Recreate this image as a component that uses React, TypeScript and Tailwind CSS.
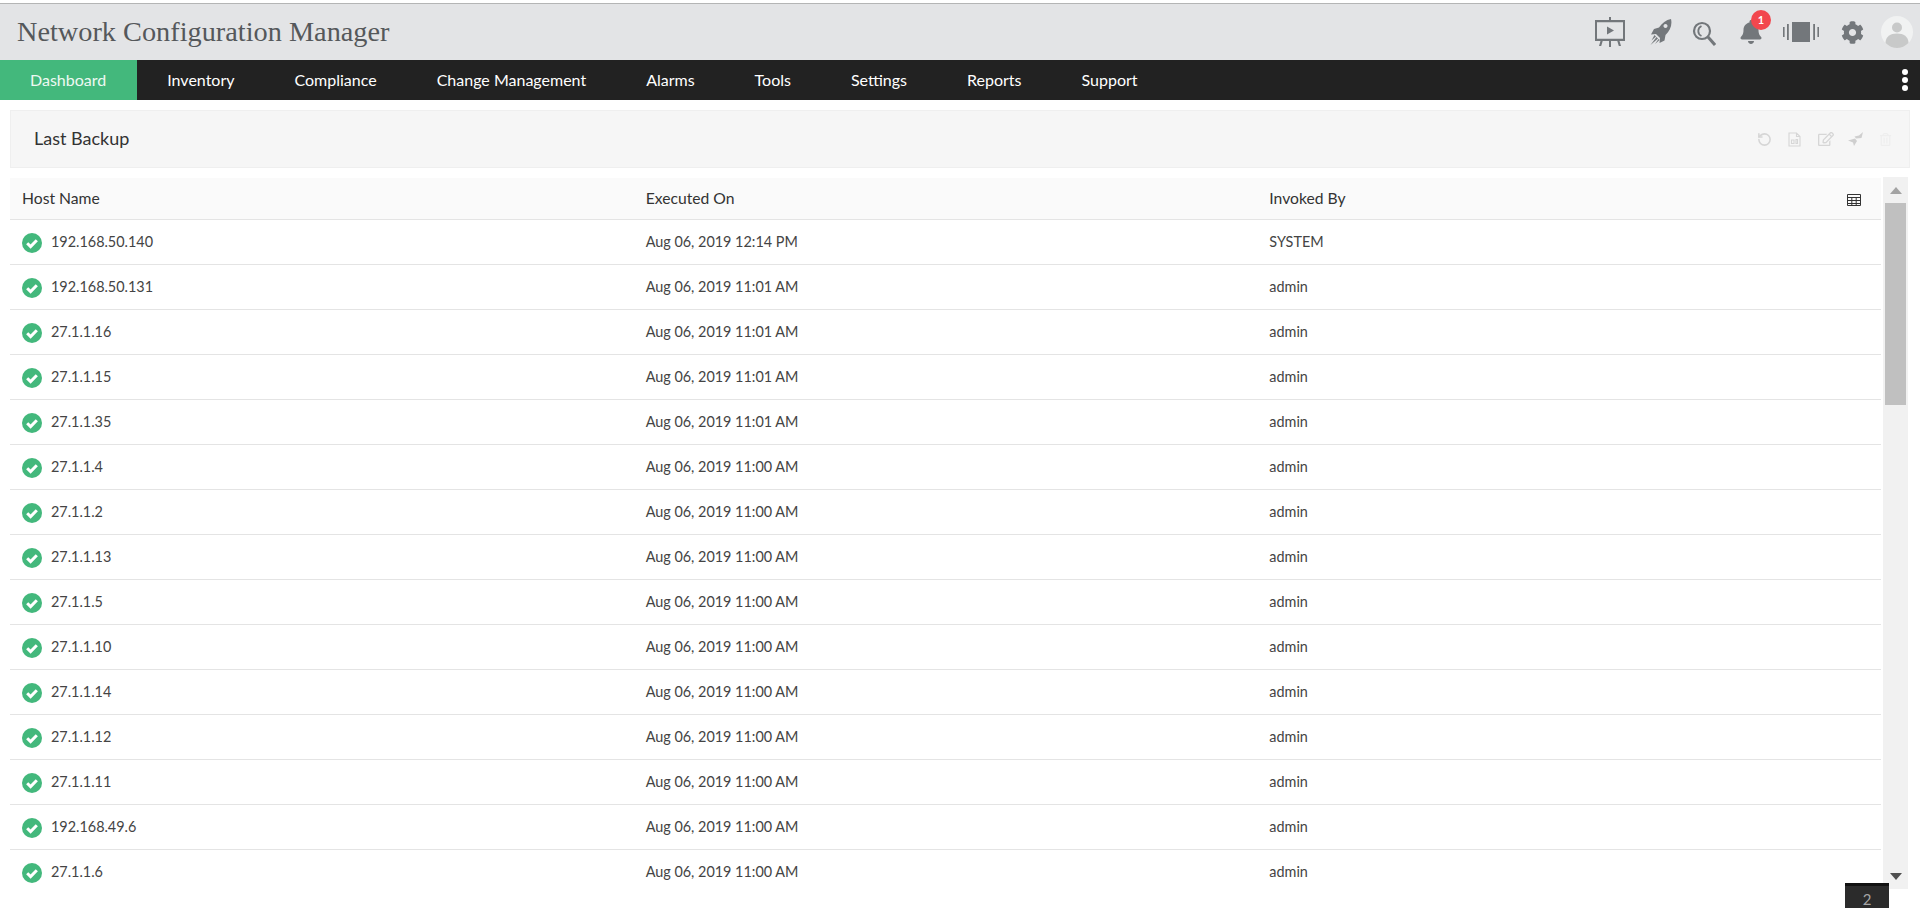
import { FaBell, FaCog, FaRegEdit, FaRegTrashAlt } from 'react-icons/fa';
import { RotateCcw } from 'lucide-react';

const NAV_ITEMS = ['Inventory', 'Compliance', 'Change Management', 'Alarms', 'Tools', 'Settings', 'Reports', 'Support'];

const ROWS = [
  ['192.168.50.140', 'Aug 06, 2019 12:14 PM', 'SYSTEM'],
  ['192.168.50.131', 'Aug 06, 2019 11:01 AM', 'admin'],
  ['27.1.1.16', 'Aug 06, 2019 11:01 AM', 'admin'],
  ['27.1.1.15', 'Aug 06, 2019 11:01 AM', 'admin'],
  ['27.1.1.35', 'Aug 06, 2019 11:01 AM', 'admin'],
  ['27.1.1.4', 'Aug 06, 2019 11:00 AM', 'admin'],
  ['27.1.1.2', 'Aug 06, 2019 11:00 AM', 'admin'],
  ['27.1.1.13', 'Aug 06, 2019 11:00 AM', 'admin'],
  ['27.1.1.5', 'Aug 06, 2019 11:00 AM', 'admin'],
  ['27.1.1.10', 'Aug 06, 2019 11:00 AM', 'admin'],
  ['27.1.1.14', 'Aug 06, 2019 11:00 AM', 'admin'],
  ['27.1.1.12', 'Aug 06, 2019 11:00 AM', 'admin'],
  ['27.1.1.11', 'Aug 06, 2019 11:00 AM', 'admin'],
  ['192.168.49.6', 'Aug 06, 2019 11:00 AM', 'admin'],
  ['27.1.1.6', 'Aug 06, 2019 11:00 AM', 'admin'],
];

function CheckBadge() {
  return (
    <svg width="20" height="20" viewBox="0 0 20 20" className="mt-[2px] shrink-0">
      <circle cx="10" cy="10" r="10" fill="#43b87c" />
      <path d="M5.200 10.200 8.600 13.600 14.800 7.200" fill="none" stroke="#fff" strokeWidth="3" />
    </svg>
  );
}

function Presentation() {
  return (
    <svg width="32" height="30" viewBox="0 0 32 30" fill="#73777b">
      <rect x="15" y="0" width="2" height="4" />
      <path d="M1 3h30v21H1zM3 5.200v16.600h26V5.200z" fillRule="evenodd" />
      <path d="M13 9.500 20 13.500 13 17.500z" />
      <path d="M15 24h2v6h-2zM6.500 24h2.200l-1.500 5H5zM23.300 24h2.200l1.500 5h-2.200z" />
    </svg>
  );
}

function Rocket() {
  return (
    <svg width="23" height="26" viewBox="0 0 23 26" fill="#73777b">
      <path
        fillRule="evenodd"
        d="M22 0C23.500 6 21 12 16.500 16L15.500 21.500 10.500 24 11 19 7 15 2 15.500 5 10 10 8.500C13 4 17 1 22 0ZM16.500 5A2 2 0 1 0 16.510 5Z"
      />
      <path d="M5.500 16 7 17.500 2.500 21.500ZM7.500 18 9 19.500 1.500 26ZM9.500 20 10.500 21 6 25Z" />
    </svg>
  );
}

function Magnifier() {
  return (
    <svg width="24" height="26" viewBox="0 0 24 26" fill="none" stroke="#73777b">
      <circle cx="10" cy="10" r="8" strokeWidth="2.200" />
      <path d="M9.500 5A5.500 5.500 0 0 0 9.500 15" strokeWidth="1.800" />
      <path d="M16 16 23 24" strokeWidth="3" />
    </svg>
  );
}

function Vibrate() {
  return (
    <svg width="36" height="20" viewBox="0 0 36 20" fill="#73777b">
      <rect x="9" y="0" width="18" height="20" />
      <rect x="0" y="5" width="1.600" height="10" />
      <rect x="4" y="2" width="1.800" height="16" />
      <rect x="30.200" y="2" width="1.800" height="16" />
      <rect x="34.400" y="5" width="1.600" height="10" />
    </svg>
  );
}

function Avatar() {
  return (
    <svg width="32" height="32" viewBox="0 0 32 32">
      <circle cx="16" cy="16" r="16" fill="#f1f2f2" />
      <circle cx="16" cy="11.500" r="5" fill="#c8c9c9" />
      <path d="M4.500 27c0-6.500 5-9.500 11.500-9.500S27.500 20.500 27.500 27c-3 3-7 5-11.500 5S7.500 30 4.500 27z" fill="#c8c9c9" />
    </svg>
  );
}

function TableIcon() {
  return (
    <svg width="14" height="12" viewBox="0 0 14 12" fill="none" stroke="#333" strokeWidth="1">
      <path d="M.5.500h13v11H.5zM.5 3.500h13M.5 6.500h13M.5 9.500h13M4.800 3v8.500M9.200 3v8.500" />
    </svg>
  );
}

export default function App() {
  return (
    <div className="relative flex h-[908px] flex-col overflow-hidden bg-white font-['Lato',sans-serif] text-[#444]">
      <div className="mt-[3px] flex h-[57px] items-center justify-between border-t border-[#b4b5b5] bg-[#e3e4e6]">
        <h1 className="ml-[17px] font-['Liberation_Serif',serif] text-[28.300px] font-normal text-[#55585b]">
          Network Configuration Manager
        </h1>
        <div className="flex items-center pr-[7px]">
          <Presentation />
          <div className="ml-[23px]"><Rocket /></div>
          <div className="ml-[20px] mt-[3px]"><Magnifier /></div>
          <div className="relative ml-[23px]">
            <FaBell className="text-[24px] text-[#73777b]" />
            <span className="absolute -right-[8px] -top-[10px] flex h-[20px] w-[20px] items-center justify-center rounded-full bg-[#f2474e] text-[11px] font-bold text-white">
              1
            </span>
          </div>
          <div className="ml-[20px]"><Vibrate /></div>
          <FaCog className="ml-[22px] text-[23px] text-[#73777b]" />
          <div className="ml-[17px]"><Avatar /></div>
        </div>
      </div>

      <nav className="flex h-[40px] items-center justify-between bg-[#222] text-[16px] text-white">
        <div className="flex h-full">
          <a className="flex items-center bg-[#43b87c] pl-[30px] pr-[31px] text-[#eef8f2]">Dashboard</a>
          {NAV_ITEMS.map((item) => (
            <a key={item} className="flex items-center px-[30px]">{item}</a>
          ))}
        </div>
        <div className="mr-[12px] flex flex-col gap-[2px]">
          <span className="h-[6px] w-[6px] rounded-full bg-white" />
          <span className="h-[6px] w-[6px] rounded-full bg-white" />
          <span className="h-[6px] w-[6px] rounded-full bg-white" />
        </div>
      </nav>

      <main className="px-[10px] pt-[10px]">
        <div className="flex h-[58px] items-center justify-between border border-[#efefef] bg-[#f6f6f6] pl-[23px] pr-[17px]">
          <h2 className="-mt-[1px] text-[18px] font-normal text-[#333]">Last Backup</h2>
          <div className="flex items-center gap-[16px] text-[#d6d6d6]">
            <RotateCcw size={15} strokeWidth={2.500} />
            <svg width="13" height="15" viewBox="0 0 13 15" fill="none" stroke="currentColor" strokeWidth="1.100">
              <path d="M1 1h7.500L12 4.500V14H1zM8.500 1v3.500H12M3.500 8h2.500v3.500H3.500zM8 7.500h1.500v4H8z" />
            </svg>
            <FaRegEdit className="ml-[1px] text-[16px]" />
            <svg width="15" height="14" viewBox="0 0 15 14" fill="#cfcfcf" className="-ml-[2px]">
              <path d="M0 8.500 7 6.500 9 9 6 14 5 10.500ZM15 0 13.500 6 8 6.500 6.500 4.500 11 3.500Z" />
            </svg>
            <FaRegTrashAlt className="text-[13px] text-[#eeeeee]" />
          </div>
        </div>

        <div className="mt-[10px] flex">
          <div className="h-[711px] w-[1871px] overflow-hidden">
            <div className="relative grid h-[42px] grid-cols-3 items-center border-b border-[#e4e4e4] bg-[#fafafa] text-[15.700px] text-[#333]">
              <div className="pl-[12px]">Host Name</div>
              <div className="pl-[12px]">Executed On</div>
              <div className="pl-[12px]">Invoked By</div>
              <span className="absolute right-[20px] top-[16px]"><TableIcon /></span>
            </div>
            {ROWS.map(([host, executed, invoked]) => (
              <div key={host} className="grid h-[45px] grid-cols-3 items-center border-b border-[#e4e4e4] text-[14.400px]">
                <div className="flex items-center gap-[9px] pl-[12px]">
                  <CheckBadge />
                  <span className="-mt-[1px]">{host}</span>
                </div>
                <div className="-mt-[1px] pl-[12px]">{executed}</div>
                <div className="-mt-[1px] pl-[12px]">{invoked}</div>
              </div>
            ))}
          </div>

          <div className="-mt-[1px] ml-[2px] flex h-[712px] w-[25px] flex-col items-center justify-between bg-[#f1f1f1]">
            <div className="flex w-full flex-col items-center">
              <span className="mt-[10px] h-0 w-0 border-x-[6px] border-b-[7px] border-x-transparent border-b-[#a3a3a3]" />
              <span className="mt-[9px] h-[202px] w-[21px] bg-[#c0c0c0]" />
            </div>
            <span className="mb-[9px] h-0 w-0 border-x-[6px] border-t-[7px] border-x-transparent border-t-[#505050]" />
          </div>
        </div>
      </main>

      <div className="absolute left-[1845px] top-[883px] h-[40px] w-[44px] border-t-[3px] border-[#111] bg-[#2b2b2b] pt-[2px] text-center text-[15px] text-[#a5a5a5]">
        2
      </div>
    </div>
  );
}
